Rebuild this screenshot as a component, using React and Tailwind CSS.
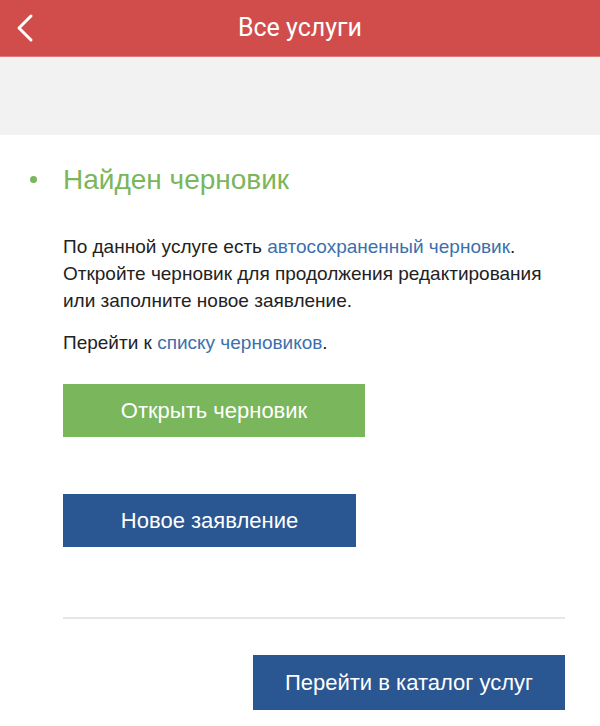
export default function App() {
  return (
    <div className="w-[600px] h-[726px] bg-white overflow-hidden" style={{ fontFamily: '"Liberation Sans", Arial, sans-serif' }}>
      {/* header */}
      <div className="relative h-[57px] bg-[#d04d4b] flex items-center justify-center border-b border-[#e07a78]">
        <svg className="absolute left-[15px] top-[13px]" width="20" height="30" viewBox="0 0 20 30" fill="none">
          <path d="M16 3 L4 15 L16 27" stroke="white" strokeWidth="3" strokeLinecap="round" strokeLinejoin="round" />
        </svg>
        <h1 className="text-white text-[25px]" style={{ fontFamily: 'Roboto, sans-serif' }}>Все услуги</h1>
      </div>

      {/* gray band */}
      <div className="h-[78px] bg-[#f2f2f2]" />

      <div className="pl-[63px] pr-[35px]">
        <div className="relative mt-[28px] h-[34px] flex items-center">
          <span className="absolute left-[-33px] top-[13px] w-[7px] h-[7px] rounded-full bg-[#7ab65b]" />
          <h2 className="text-[28px] text-[#7ab65b]">Найден черновик</h2>
        </div>

        <p className="mt-[36px] text-[19px] leading-[27px] text-[#222]">
          По данной услуге есть <a className="text-[#3b70ad]">автосохраненный черновик</a>.<br />
          Откройте черновик для продолжения редактирования или заполните новое заявление.
        </p>

        <p className="mt-[15px] text-[19px] leading-[27px] text-[#222]">
          Перейти к <a className="text-[#3b70ad]">списку черновиков</a>.
        </p>

        <button className="mt-[28px] w-[302px] h-[53px] bg-[#7ab65b] text-white text-[22px] flex items-center justify-center">
          Открыть черновик
        </button>

        <button className="mt-[57px] w-[293px] h-[53px] bg-[#2a5691] text-white text-[22px] flex items-center justify-center">
          Новое заявление
        </button>

        <div className="mt-[70px] h-[2px] bg-[#e6e6e6]" />

        <div className="mt-[36px] flex justify-end">
          <button className="w-[312px] h-[55px] bg-[#2a5691] text-white text-[22px] flex items-center justify-center">
            Перейти в каталог услуг
          </button>
        </div>
      </div>
    </div>
  );
}
